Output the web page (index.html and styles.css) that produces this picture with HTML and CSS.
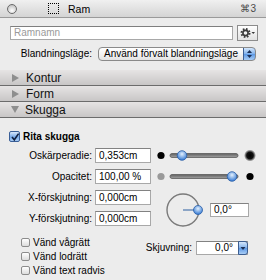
FILE: index.html
```
<!DOCTYPE html>
<html lang="sv">
<head>
    <meta charset="UTF-8">
    <title>Ram</title>
    <link rel="stylesheet" href="styles.css">
</head>
<body>
    <div class="titlebar">
        <span class="close"></span>
        <span class="frame-icon"></span>
        <span class="title">Ram</span>
        <span class="shortcut">⌘3</span>
    </div>

    <div class="top">
        <div class="name-row">
            <div class="name-field">Ramnamn</div>
            <div class="gear-btn">
                <svg width="19" height="14" viewBox="0 0 19 14">
                    <circle cx="7.5" cy="7" r="4" fill="none" stroke="#3a3a3a" stroke-width="2" stroke-dasharray="1.6 1.54"/>
                    <circle cx="7.5" cy="7" r="2.6" fill="none" stroke="#3a3a3a" stroke-width="1.6"/>
                    <path d="M13.5 6 L17 6 L15.25 8 Z" fill="#3a3a3a"/>
                </svg>
            </div>
        </div>
        <div class="blend-row">
            <span class="label">Blandningsläge:</span>
            <div class="popup">
                <span class="popup-text">Använd förvalt blandningsläge</span>
                <span class="stepper">
                    <svg width="13" height="14" viewBox="0 0 13 14">
                        <path d="M4 6 L9 6 L6.5 3 Z" fill="#1b2f55"/>
                        <path d="M4 8 L9 8 L6.5 11 Z" fill="#1b2f55"/>
                    </svg>
                </span>
            </div>
        </div>
    </div>

    <div class="section first"><span class="tri-right"></span>Kontur</div>
    <div class="section"><span class="tri-right"></span>Form</div>
    <div class="section"><span class="tri-down"></span>Skugga</div>

    <div class="shadow">
        <div class="check bold">
            <span class="box checked">
                <svg width="10" height="10" viewBox="0 0 10 10">
                    <path d="M2 5 L4.3 7.8 L8.6 1.6" fill="none" stroke="#102040" stroke-width="1.6"/>
                </svg>
            </span>
            Rita skugga
        </div>

        <div class="grid">
            <span class="label">Oskärperadie:</span>
            <div class="field">0,353cm</div>
            <svg class="slider" width="104" height="15" viewBox="0 0 104 15">
                <defs>
                    <radialGradient id="knob1" cx="50%" cy="35%" r="60%">
                        <stop offset="0" stop-color="#e4f1fd"/>
                        <stop offset="1" stop-color="#3d7fd6"/>
                    </radialGradient>
                    <radialGradient id="blur" cx="50%" cy="50%" r="50%">
                        <stop offset="0" stop-color="#000"/>
                        <stop offset="0.55" stop-color="#111"/>
                        <stop offset="1" stop-color="#000" stop-opacity="0"/>
                    </radialGradient>
                    <linearGradient id="track" x1="0" y1="0" x2="0" y2="1">
                        <stop offset="0" stop-color="#5e5e5e"/>
                        <stop offset="1" stop-color="#a4a4a4"/>
                    </linearGradient>
                </defs>
                <circle cx="7" cy="7.5" r="3.6" fill="#000"/>
                <rect x="16" y="5.5" width="68" height="4" rx="2" fill="url(#track)" stroke="#5a5a5a" stroke-width="0.8"/>
                <circle cx="28" cy="7.5" r="4.8" fill="url(#knob1)" stroke="#2c5fa6" stroke-width="0.8"/>
                <circle cx="96" cy="7.5" r="6" fill="url(#blur)"/>
            </svg>

            <span class="label">Opacitet:</span>
            <div class="field">100,00 %</div>
            <svg class="slider" width="104" height="15" viewBox="0 0 104 15">
                <circle cx="7" cy="7.5" r="3.6" fill="#999"/>
                <rect x="16" y="5.5" width="68" height="4" rx="2" fill="url(#track)" stroke="#5a5a5a" stroke-width="0.8"/>
                <circle cx="78" cy="7.5" r="4.8" fill="url(#knob1)" stroke="#2c5fa6" stroke-width="0.8"/>
                <circle cx="96" cy="7.5" r="3.6" fill="#000"/>
            </svg>

            <span class="label">X-förskjutning:</span>
            <div class="field">0,000cm</div>
            <div class="dial-cell">
                <svg width="52" height="37" viewBox="0 0 52 37">
                    <circle cx="29" cy="20" r="16" fill="none" stroke="#7a7a7a" stroke-width="1.4"/>
                    <line x1="29" y1="20" x2="44" y2="20" stroke="#4d77ad" stroke-width="1.2"/>
                    <circle cx="44" cy="20" r="4.5" fill="url(#knob1)" stroke="#2c5fa6" stroke-width="0.8"/>
                </svg>
                <div class="field angle">0,0°</div>
            </div>

            <span class="label">Y-förskjutning:</span>
            <div class="field">0,000cm</div>
        </div>

        <div class="bottom">
            <div class="checks">
                <div class="check"><span class="box"></span>Vänd vågrätt</div>
                <div class="check"><span class="box"></span>Vänd lodrätt</div>
                <div class="check"><span class="box"></span>Vänd text radvis</div>
            </div>
            <div class="skew">
                <span class="label">Skjuvning:</span>
                <div class="field skew-field">
                    <span class="skew-value">0,0°</span>
                    <span class="dropdown">
                        <svg width="10" height="12" viewBox="0 0 10 12">
                            <path d="M2.5 5 L7.5 5 L5 8 Z" fill="#1b2f55"/>
                        </svg>
                    </span>
                </div>
            </div>
        </div>
    </div>
</body>
</html>
```

FILE: styles.css
```
* {
    box-sizing: border-box;
}
body {
    margin: 0;
    width: 266px;
    height: 280px;
    overflow: hidden;
    background-color: #ececec;
    font-family: "Liberation Sans", Arial, sans-serif;
    font-size: 10px;
    color: #000;
}
.titlebar {
    display: flex;
    align-items: center;
    height: 18px;
    border-bottom: 1px solid #9a9a9a;
    background: linear-gradient(#f0f0f0, #d4d4d4);
}
.close {
    width: 10px;
    height: 10px;
    margin-left: 7px;
    border-radius: 50%;
    border: 1px solid #6a6a6a;
    background: radial-gradient(circle at 50% 70%, #ffffff, #b4b4b4);
}
.frame-icon {
    width: 11px;
    height: 11px;
    margin-left: 31px;
    border: 1px dotted #000;
}
.title {
    margin-left: 9px;
    font-size: 10.5px;
}
.shortcut {
    margin-left: auto;
    margin-right: 10px;
    color: #4a4a4a;
}
.top {
    padding: 7px 8px 0 10px;
}
.name-row {
    display: flex;
    align-items: center;
    gap: 4px;
    height: 16px;
}
.name-field {
    width: 223px;
    height: 14px;
    padding-left: 3px;
    line-height: 12px;
    color: #9a9a9a;
    background: #fff;
    border: 1px solid #a8a8a8;
    border-top-color: #7e7e7e;
}
.gear-btn {
    width: 21px;
    height: 16px;
    border: 1px solid #8c8c8c;
    background: linear-gradient(#ffffff, #e2e2e2);
}
.gear-btn svg {
    display: block;
}
.blend-row {
    display: flex;
    align-items: center;
    justify-content: flex-end;
    gap: 6px;
    margin-top: 5px;
    padding-right: 2px;
}
.popup {
    display: flex;
    width: 158px;
    height: 14px;
    border: 1px solid #8a8a8a;
    border-radius: 4px;
    background: linear-gradient(#ffffff, #f3f3f3 50%, #e3e3e3);
    overflow: hidden;
}
.popup-text {
    flex: 1;
    padding-left: 5px;
    line-height: 12px;
}
.stepper {
    width: 13px;
    margin: -1px -1px -1px 0;
    border: 1px solid #3c5e92;
    border-radius: 0 4px 4px 0;
    background: linear-gradient(#d5e7fb, #7fb0ec 50%, #5b97e4 51%, #a9cdf5);
}
.stepper svg {
    display: block;
    margin: -1px 0 0 -1px;
}
.section {
    display: flex;
    align-items: center;
    gap: 7px;
    height: 16px;
    padding-left: 12px;
    font-size: 12px;
    color: #111;
    border-bottom: 1px solid #6c6c6c;
    background: linear-gradient(#e6e4e4, #c8c6c6);
}
.section.first {
    margin-top: 9px;
}
.tri-right {
    width: 0;
    height: 0;
    border-top: 4px solid transparent;
    border-bottom: 4px solid transparent;
    border-left: 7px solid #8e8e8e;
}
.tri-down {
    width: 0;
    height: 0;
    margin-left: -1px;
    margin-right: -1px;
    border-left: 4px solid transparent;
    border-right: 4px solid transparent;
    border-top: 7px solid #8e8e8e;
}
.shadow {
    padding: 13px 8px 0 9px;
}
.check {
    display: flex;
    align-items: center;
    gap: 3px;
    height: 14px;
}
.check.bold {
    height: 11px;
    font-weight: bold;
}
.box {
    width: 9px;
    height: 9px;
    border: 1px solid #8c8c8c;
    border-radius: 2px;
    background: linear-gradient(#ffffff, #dcdcdc);
}
.box.checked {
    width: 11px;
    height: 11px;
    border-color: #3a5f98;
    background: linear-gradient(#d9e9fb, #79abea 55%, #a8cbf3);
}
.box.checked svg {
    display: block;
}
.grid {
    display: grid;
    grid-template-columns: 83px 56px 1fr;
    grid-auto-rows: 15px;
    column-gap: 3px;
    row-gap: 6px;
    margin-top: 6px;
}
.label {
    text-align: right;
    line-height: 15px;
    white-space: nowrap;
}
.field {
    height: 15px;
    padding-left: 3px;
    line-height: 13px;
    background: #fff;
    border: 1px solid #a8a8a8;
    border-top-color: #828282;
}
.slider {
    display: block;
}
.dial-cell {
    grid-column: 3;
    grid-row: 3 / span 2;
    display: flex;
    align-items: flex-start;
}
.dial-cell svg {
    display: block;
}
.field.angle {
    width: 39px;
    height: 14px;
    margin-top: 13px;
    margin-left: 4px;
    line-height: 12px;
}
.bottom {
    display: flex;
    margin-top: 9px;
}
.checks {
    padding-left: 12px;
}
.skew {
    display: flex;
    align-items: center;
    gap: 4px;
    height: 14px;
    margin-left: auto;
    margin-top: 6px;
    margin-right: 10px;
}
.skew .label {
    line-height: 14px;
}
.skew-field {
    display: flex;
    width: 52px;
    height: 14px;
    padding-left: 0;
    line-height: 12px;
}
.skew-value {
    flex: 1;
    text-align: right;
    padding-right: 5px;
}
.dropdown {
    width: 10px;
    margin: -1px -1px -1px 0;
    border: 1px solid #3c5e92;
    border-radius: 0 3px 3px 0;
    background: linear-gradient(#d5e7fb, #7fb0ec 50%, #5b97e4 51%, #a9cdf5);
}
.dropdown svg {
    display: block;
    margin-left: -1px;
}
```
